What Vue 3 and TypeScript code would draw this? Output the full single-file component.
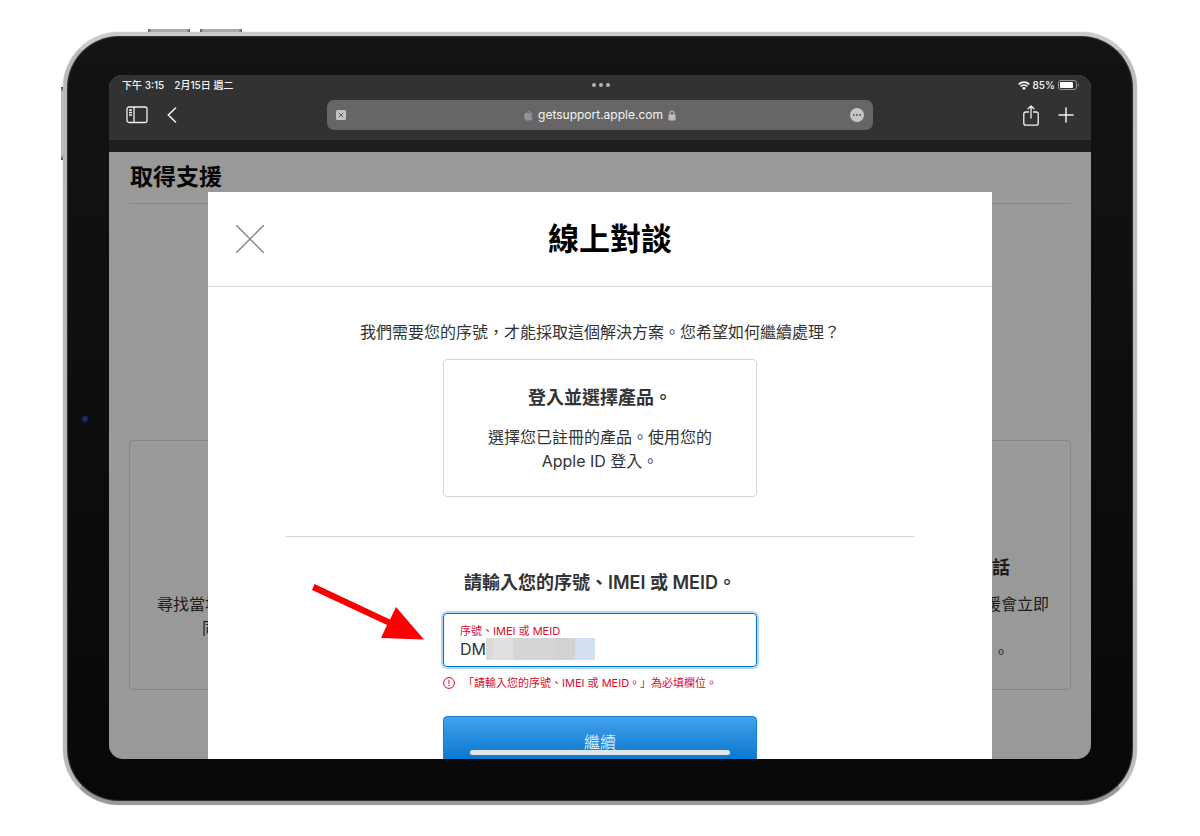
<script setup lang="ts">
import { ref } from 'vue'

const serial = ref('DM')
const blurBlocks = ['b1', 'b2', 'b3', 'b4', 'b5']
</script>

<template>
  <div class="stage">
    <div class="device">
      <span class="hw vol-a"></span>
      <span class="hw vol-b"></span>
      <span class="hw power"></span>
      <span class="camera"></span>

      <div class="screen">
        <header class="chrome">
          <div class="status">
            <div class="status-left"><span>下午 3:15</span><span>2月15日 週二</span></div>
            <div class="multitask"><i></i><i></i><i></i></div>
            <div class="status-right">
              <svg width="12" height="9" viewBox="0 0 12 9" fill="none" stroke="#fff" stroke-width="1.7">
                <path d="M.7 3.4a7.5 7.5 0 0 1 10.6 0M2.6 5.4a4.8 4.8 0 0 1 6.8 0" />
                <path d="M6 9 4 6.9a2.8 2.8 0 0 1 4 0z" fill="#fff" stroke="none" />
              </svg>
              <span>85%</span>
              <svg width="22" height="10" viewBox="0 0 22 10">
                <rect x=".5" y=".5" width="18" height="9" rx="2.5" fill="none" stroke="#949494" />
                <rect x="2" y="2" width="13" height="6" rx="1" fill="#fff" />
                <path d="M20 3.3c1.3.4 1.3 3 0 3.4z" fill="#949494" />
              </svg>
            </div>
          </div>
          <div class="toolbar">
            <div class="tools">
              <button type="button" aria-label="側邊欄">
                <svg width="22" height="18" viewBox="0 0 22 18" fill="none" stroke="#f2f2f2" stroke-width="1.3">
                  <rect x="1" y="1" width="20" height="15.5" rx="2" />
                  <path d="M8 1v15.5M3 4h3M3 6.5h3M3 9h3" />
                </svg>
              </button>
              <button type="button" aria-label="返回">
                <svg width="10" height="16" viewBox="0 0 10 16" fill="none" stroke="#f5f5f5" stroke-width="1.6" stroke-linecap="round" stroke-linejoin="round">
                  <path d="M8.5 1 1.3 8l7.2 7" />
                </svg>
              </button>
            </div>
            <div class="address">
              <button type="button" aria-label="關閉標籤頁">
                <svg width="10" height="10" viewBox="0 0 10 10">
                  <rect width="10" height="10" rx="1.5" fill="#c4c4c8" />
                  <path d="m2.7 2.7 4.6 4.6m0-4.6L2.7 7.3" stroke="#5f5f61" stroke-width="1" />
                </svg>
              </button>
              <div class="url">
                <svg width="9" height="11" viewBox="0 0 18 22" fill="#929292">
                  <path d="M12.3 0c.2 2.400-1.700 4.700-3.900 4.800C8.100 2.500 10.200.3 12.300 0zM9 6.300c1 0 2.300-1.300 4.400-1.300 1.500 0 3 .8 3.900 2.100-3.600 2.200-3 7.100.6 8.600-.9 2.500-2.800 5.600-4.800 5.600-1.500 0-2-.9-3.800-.9s-2.400.9-3.800.9C2.900 21.300 0 16.300 0 12c0-4.300 2.700-6.800 5.300-6.800C7 5.200 8.200 6.300 9 6.300z" />
                </svg>
                <span>getsupport.apple.com</span>
                <svg width="8" height="11" viewBox="0 0 8 11">
                  <path d="M2 5V3a2 2 0 0 1 4 0v2" fill="none" stroke="#bdbdbf" stroke-width="1.1" />
                  <rect x=".5" y="4.500" width="7" height="6" rx="1" fill="#bdbdbf" />
                </svg>
              </div>
              <button type="button" class="more" aria-label="更多">
                <svg width="14" height="14" viewBox="0 0 14 14">
                  <circle cx="7" cy="7" r="7" fill="#c6c6c9" />
                  <g fill="#59595b"><circle cx="3.800" cy="7" r="1" /><circle cx="7" cy="7" r="1" /><circle cx="10.200" cy="7" r="1" /></g>
                </svg>
              </button>
            </div>
            <div class="tools end">
              <button type="button" aria-label="分享">
                <svg width="16" height="21" viewBox="0 0 16 21" fill="none" stroke="#f2f2f2" stroke-width="1.300" stroke-linecap="round" stroke-linejoin="round">
                  <path d="M5.500 7H2.700A1.900 1.900 0 0 0 .8 8.900v9.300c0 1 .8 1.900 1.900 1.900h10.600c1 0 1.900-.8 1.900-1.900V8.900c0-1-.8-1.900-1.900-1.900h-2.800M8 13V1M5 3.800 8 1l3 2.800" />
                </svg>
              </button>
              <button type="button" aria-label="新增">
                <svg width="16" height="16" viewBox="0 0 16 16" stroke="#f2f2f2" stroke-width="1.500" stroke-linecap="round">
                  <path d="M8 1v14M1 8h14" />
                </svg>
              </button>
            </div>
          </div>
        </header>

        <div class="viewport">
          <main class="page">
            <h1>取得支援</h1>
            <div class="cards">
              <section class="card left">
                <p>尋找當地</p>
                <p class="indent">同</p>
              </section>
              <section class="card right">
                <h2>話</h2>
                <p>援會立即</p>
                <p class="tail">。</p>
              </section>
            </div>
          </main>

          <section class="modal" role="dialog" aria-labelledby="dialog-title">
            <header class="modal-head">
              <button type="button" class="close" aria-label="關閉">
                <svg width="28" height="28" viewBox="0 0 28 28" stroke="#86868b" stroke-width="1.500">
                  <path d="m0 0 28 28M28 0 0 28" />
                </svg>
              </button>
              <h2 id="dialog-title">線上對談</h2>
            </header>
            <div class="modal-body">
              <p class="intro">我們需要您的序號，才能採取這個解決方案。您希望如何繼續處理？</p>
              <button type="button" class="choice">
                <strong>登入並選擇產品。</strong>
                <span>選擇您已註冊的產品。使用您的<br />Apple ID 登入。</span>
              </button>
              <hr />
              <form @submit.prevent>
                <h3>請輸入您的序號、IMEI 或 MEID。</h3>
                <div class="field">
                  <label for="serial">序號、IMEI 或 MEID</label>
                  <input id="serial" v-model="serial" type="text" aria-describedby="serial-error" />
                  <div class="mosaic"><i v-for="b in blurBlocks" :key="b" :class="b"></i></div>
                  <svg class="arrow" width="112" height="58" viewBox="0 0 112 58" fill="#fb0000">
                    <path d="M2.500 0 78 35.500 84 23 112 55.500 69 54 75 41 0 6z" />
                  </svg>
                </div>
                <p id="serial-error" class="error">
                  <svg width="12" height="12" viewBox="0 0 12 12" fill="none" stroke="#d70c2d" stroke-width="1">
                    <circle cx="6" cy="6" r="5.400" />
                    <path d="M6 2.800v4M6 8v1.200" />
                  </svg>
                  <span>「請輸入您的序號、IMEI 或 MEID。」為必填欄位。</span>
                </p>
                <button type="submit" class="submit">繼續</button>
              </form>
            </div>
          </section>
          <span class="home-bar"></span>
        </div>
      </div>
    </div>
  </div>
</template>

<style>
body {
  margin: 0;
  background: #fff;
}
</style>

<style scoped>
* {
  box-sizing: border-box;
}
.stage {
  display: flex;
  height: 100vh;
  padding: 32px 63px 31px;
  background: #fff;
  color: #333;
  font-family: Inter, "Noto Sans CJK TC", sans-serif;
  font-size: 16px;
  line-height: 24px;
}
h1, h2, h3, p {
  margin: 0;
}
button {
  padding: 0;
  border: 0;
  background: none;
  color: inherit;
  font: inherit;
  cursor: pointer;
}
svg {
  display: block;
  flex: none;
}
.device {
  position: relative;
  display: flex;
  flex: 1;
  min-width: 0;
  padding: 39px 42px 42px;
  border: 4px solid;
  border-color: #cacaca #bcbcbc #9a9899 #b8b8b8;
  border-radius: 56px;
  background: linear-gradient(#131313, #080808);
  box-shadow: inset 0 0 1px 1px #333, 0 0 1px #888;
}
.hw {
  position: absolute;
  background: linear-gradient(90deg, #555, #aaa 8%, #aaa 92%, #555);
}
.vol-a, .vol-b {
  top: -7px;
  width: 42px;
  height: 3px;
}
.vol-a {
  left: 81px;
}
.vol-b {
  left: 133px;
}
.power {
  top: 51px;
  left: -6px;
  width: 2px;
  height: 73px;
  background: linear-gradient(#444, #bbb 7%, #bbb 93%, #444);
}
.camera {
  position: absolute;
  top: 379px;
  left: 14px;
  width: 8px;
  height: 8px;
  border-radius: 50%;
  background: radial-gradient(#2c4682 0, #141f42 45%, #0b0d18 75%);
}
.screen {
  display: flex;
  flex: 1;
  flex-direction: column;
  min-width: 0;
  overflow: hidden;
  border-radius: 14px;
  background: #999;
}
.chrome {
  border-bottom: 12px solid #1e1e1e;
  background: #323232;
  color: #f5f5f5;
}
.status {
  display: grid;
  grid-template-columns: 1fr auto 1fr;
  align-items: center;
  height: 20px;
  padding: 0 11px 0 13px;
  font-size: 10px;
  font-weight: 500;
  line-height: 20px;
}
.status-left {
  display: flex;
  gap: 10px;
}
.status-right {
  display: flex;
  align-items: center;
  justify-content: flex-end;
  gap: 3px;
}
.multitask {
  display: flex;
  gap: 3px;
}
.multitask i {
  width: 4px;
  height: 4px;
  border-radius: 50%;
  background: #b4b4b4;
}
.toolbar {
  display: grid;
  grid-template-columns: 1fr 546px 1fr;
  align-items: center;
  height: 45px;
  padding: 0 17px 5px;
}
.tools {
  display: flex;
  align-items: center;
  gap: 19px;
}
.tools.end {
  justify-content: flex-end;
}
.address {
  display: grid;
  grid-template-columns: 1fr auto 1fr;
  align-items: center;
  height: 30px;
  padding: 0 9px;
  border-radius: 7px;
  background: #666;
}
.address button {
  justify-self: start;
}
.address .more {
  justify-self: end;
}
.url {
  display: flex;
  align-items: center;
  gap: 5px;
  font-size: 12px;
}
.viewport {
  position: relative;
  flex: 1;
  min-height: 0;
  overflow: hidden;
}
.page {
  padding: 9px 20px 0;
  color: #1c1c1c;
}
.page h1 {
  height: 43px;
  padding-left: 1px;
  border-bottom: 1px solid #868686;
  color: #060606;
  font-size: 23px;
  font-weight: 600;
  line-height: 32px;
}
.cards {
  display: flex;
  justify-content: space-between;
  margin-top: 236px;
}
.card {
  width: 300px;
  height: 250px;
  padding: 115px 21px 0 27px;
  border: 1px solid #858585;
  border-radius: 4px;
}
.card.left p:first-child {
  margin-top: 36px;
}
.card .indent {
  padding-left: 45px;
}
.card.right {
  text-align: right;
}
.card.right h2 {
  padding-right: 39px;
  margin-bottom: 12px;
  font-size: 18px;
}
.card.right .tail {
  padding: 24px 40px 0 0;
}
.modal {
  position: absolute;
  top: 40px;
  left: 50%;
  width: 80%;
  max-width: 784px;
  background: #fff;
  transform: translateX(-50%);
}
.modal-head {
  display: grid;
  grid-template-columns: 84px 1fr 64px;
  align-items: center;
  height: 95px;
  border-bottom: 1px solid #d6d6d6;
}
.modal-head h2 {
  color: #000;
  font-size: 31px;
  font-weight: 600;
  line-height: 40px;
  text-align: center;
}
.close {
  justify-self: center;
}
.modal-body {
  display: flex;
  flex-direction: column;
  align-items: center;
  padding: 33px 10% 40px;
}
.intro {
  margin-bottom: 15px;
}
.choice {
  width: 314px;
  padding: 26px 20px 23px;
  border: 1px solid #d6d6d6;
  border-radius: 4px;
}
.choice strong, .choice span {
  display: block;
}
.choice strong {
  margin-bottom: 15px;
  font-size: 18px;
  font-weight: 600;
}
hr {
  width: 100%;
  margin: 39px 0 34px;
  border: 0;
  border-top: 1px solid #d6d6d6;
}
form {
  width: 314px;
}
h3 {
  margin-bottom: 18px;
  font-size: 18px;
  font-weight: 600;
  text-align: center;
  white-space: nowrap;
}
.field {
  position: relative;
  height: 54px;
  padding: 9px 16px 0;
  border: 1px solid #0070c9;
  border-radius: 4px;
  box-shadow: 0 0 0 2px #b5d7f7;
}
.field label {
  display: block;
  color: #d70c2d;
  font-size: 11px;
  line-height: 16px;
}
.field input {
  display: block;
  width: 100%;
  height: 20px;
  padding: 0;
  border: 0;
  outline: 0;
  background: none;
  color: #333;
  font: inherit;
}
.mosaic {
  position: absolute;
  top: 24px;
  left: 42px;
  display: flex;
  height: 22px;
}
.mosaic i {
  width: 20px;
  background: #d6d6d6;
}
.mosaic .b1 {
  width: 7px;
  background: #dadada;
}
.mosaic .b2 {
  background: #e0e0e0;
}
.mosaic .b3 {
  width: 42px;
  background: #d5d5d5;
}
.mosaic .b4 {
  background: #d2d2d2;
}
.mosaic .b5 {
  background: #d3dff0;
}
.arrow {
  position: absolute;
  top: -30px;
  left: -132px;
}
.error {
  display: flex;
  align-items: center;
  gap: 8px;
  margin: 8px 0 25px;
  color: #d70c2d;
  font-size: 11px;
  line-height: 16px;
  white-space: nowrap;
}
.submit {
  display: block;
  width: 100%;
  height: 52px;
  border: 1px solid #1482d0;
  border-radius: 4px;
  background: linear-gradient(#42a1ec, #0070c9);
  color: #fff;
  font-weight: 300;
}
.home-bar {
  position: absolute;
  bottom: 4px;
  left: 50%;
  width: 260px;
  height: 5px;
  border-radius: 3px;
  background: #dfe6ec;
  transform: translateX(-50%);
}
</style>
